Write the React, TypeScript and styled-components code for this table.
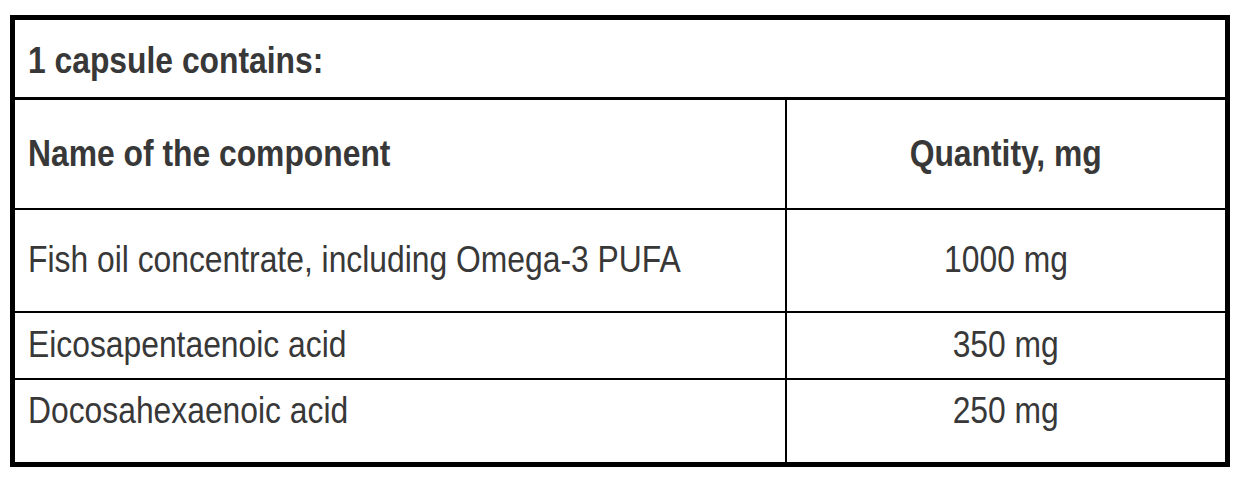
import styled, { createGlobalStyle } from "styled-components";

const GlobalStyle = createGlobalStyle`
  html, body {
    margin: 0;
    padding: 0;
    background: #ffffff;
  }
  body {
    font-family: "Liberation Sans", Arial, sans-serif;
    color: #383838;
  }
`;

const Page = styled.div`
  padding: 15px 0 0 10px;
`;

const Table = styled.div`
  box-sizing: border-box;
  width: 1220px;
  height: 452px;
  border: 5px solid #000;
  display: flex;
  flex-direction: column;
`;

const Caption = styled.div`
  box-sizing: border-box;
  height: 80px;
  padding: 4px 0 0 13px;
  border-bottom: 3px solid #000;
  display: flex;
  align-items: center;
`;

const Row = styled.div<{ $height: number; $last?: boolean }>`
  box-sizing: border-box;
  height: ${p => p.$height}px;
  display: flex;
  border-bottom: ${p => (p.$last ? "none" : "2px solid #000")};
`;

const Cell = styled.div<{ $center?: boolean; $lift: number }>`
  box-sizing: border-box;
  display: flex;
  align-items: center;
  justify-content: ${p => (p.$center ? "center" : "flex-start")};
  padding: 0 0 ${p => p.$lift}px ${p => (p.$center ? 0 : 13)}px;
  ${p => (p.$center
    ? `flex: 1;`
    : `width: 772px; border-right: 2px solid #000;`)}
`;

const Text = styled.span<{ $bold?: boolean; $center?: boolean }>`
  display: inline-block;
  font-size: 37px;
  line-height: 1;
  white-space: nowrap;
  font-weight: ${p => (p.$bold ? 700 : 400)};
  transform: scaleX(0.86);
  transform-origin: ${p => (p.$center ? "center" : "left")} center;
`;

type Item = { name: string; qty: string; height: number; lift: number };

const items: Item[] = [
  { name: "Fish oil concentrate, including Omega-3 PUFA", qty: "1000 mg", height: 103, lift: 3 },
  { name: "Eicosapentaenoic acid", qty: "350 mg", height: 67, lift: 3 },
  { name: "Docosahexaenoic acid", qty: "250 mg", height: 82, lift: 21 },
];

export default function App() {
  return (
    <Page>
      <GlobalStyle />
      <Table>
        <Caption>
          <Text $bold>1 capsule contains:</Text>
        </Caption>
        <Row $height={110}>
          <Cell $lift={2}>
            <Text $bold>Name of the component</Text>
          </Cell>
          <Cell $center $lift={2}>
            <Text $bold $center>Quantity, mg</Text>
          </Cell>
        </Row>
        {items.map((item, i) => (
          <Row key={item.name} $height={item.height} $last={i === items.length - 1}>
            <Cell $lift={item.lift}>
              <Text>{item.name}</Text>
            </Cell>
            <Cell $center $lift={item.lift}>
              <Text $center>{item.qty}</Text>
            </Cell>
          </Row>
        ))}
      </Table>
    </Page>
  );
}
